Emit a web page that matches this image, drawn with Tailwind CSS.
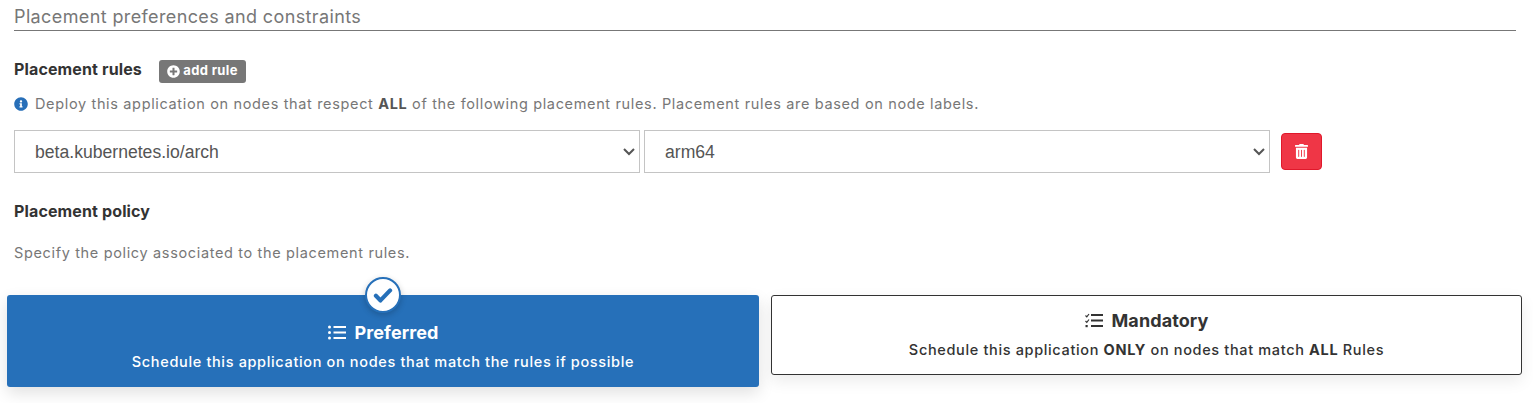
<!DOCTYPE html>
<html>
<head>
<meta charset="utf-8">
<script src="https://cdn.jsdelivr.net/npm/@tailwindcss/browser@4"></script>
</head>
<body class="bg-white font-['Inter',sans-serif] text-[#333] overflow-hidden">
<div class="h-[403px] w-[1533px] flex flex-col">
  <div class="ml-[14px] mr-[17px] h-[31px] border-b border-[#777] pt-[6px] text-[18px] leading-[22px] text-[#777] tracking-[0.38px]">Placement preferences and constraints</div>

  <div class="ml-[14px] mt-[29px] flex items-center h-[22px]">
    <span class="text-[16px] leading-[18px] font-bold tracking-[0.13px] text-[#333] w-[145px] mb-[4px]">Placement rules</span>
    <button class="h-[23px] w-[87px] rounded-[3px] bg-[#777] text-white text-[13px] font-bold tracking-[0.35px] flex items-center justify-center gap-[3px]">
      <svg class="w-[13px] h-[13px]" viewBox="0 0 512 512" fill="#fff"><path d="M256 8C119 8 8 119 8 256s111 248 248 248 248-111 248-248S393 8 256 8zm144 276c0 6.600-5.400 12-12 12h-92v92c0 6.600-5.400 12-12 12h-56c-6.600 0-12-5.400-12-12v-92h-92c-6.600 0-12-5.400-12-12v-56c0-6.600 5.400-12 12-12h92v-92c0-6.600 5.400-12 12-12h56c6.600 0 12 5.400 12 12v92h92c6.600 0 12 5.400 12 12v56z"/></svg>
      <span>add rule</span>
    </button>
  </div>

  <div class="ml-[14px] mt-[12px] flex items-center h-[20px] text-[14.500px] text-[#777] tracking-[0.65px]">
    <svg class="w-[14px] h-[14px] mr-[7px]" viewBox="0 0 512 512" fill="#286fb8"><path d="M256 8C119 8 8 119 8 256c0 137 111 248 248 248s248-111 248-248C504 119 393 8 256 8zm0 110c23.200 0 42 18.800 42 42s-18.800 42-42 42-42-18.800-42-42 18.800-42 42-42zm56 254c0 6.600-5.400 12-12 12h-88c-6.600 0-12-5.400-12-12v-24c0-6.600 5.400-12 12-12h12v-64h-12c-6.600 0-12-5.400-12-12v-24c0-6.600 5.400-12 12-12h64c6.600 0 12 5.400 12 12v100h12c6.600 0 12 5.400 12 12v24z"/></svg>
    <span>Deploy this application on nodes that respect <b class="font-bold text-[#555]">ALL</b> of the following placement rules. Placement rules are based on node labels.</span>
  </div>

  <div class="ml-[14px] mt-[16px] flex items-center h-[43px]">
    <div class="relative w-[626px] h-[43px]">
      <select class="appearance-none w-full h-full border border-[#c4c4c4] bg-white pl-[20px] pt-[2px] text-[17.600px] font-['Liberation_Sans',sans-serif] text-[#555]"><option>beta.kubernetes.io/arch</option></select>
      <svg class="absolute right-[5px] top-[18px] w-[12px] h-[8px] pointer-events-none" viewBox="0 0 12 8" fill="none" stroke="#555" stroke-width="2"><path d="M1 1l5 5 5-5"/></svg>
    </div>
    <div class="relative ml-[4px] w-[626px] h-[43px]">
      <select class="appearance-none w-full h-full border border-[#c4c4c4] bg-white pl-[20px] pt-[2px] text-[17.600px] font-['Liberation_Sans',sans-serif] text-[#555]"><option>arm64</option></select>
      <svg class="absolute right-[5px] top-[18px] w-[12px] h-[8px] pointer-events-none" viewBox="0 0 12 8" fill="none" stroke="#555" stroke-width="2"><path d="M1 1l5 5 5-5"/></svg>
    </div>
    <button class="ml-[11px] w-[41px] h-[37px] rounded-[4px] bg-[#ef3646] border border-[#e0182b] flex items-center justify-center">
      <svg class="w-[13px] h-[15px]" viewBox="0 0 448 512" fill="#fff"><path d="M32 464a48 48 0 0 0 48 48h288a48 48 0 0 0 48-48V128H32zm272-256a16 16 0 0 1 32 0v224a16 16 0 0 1-32 0zm-96 0a16 16 0 0 1 32 0v224a16 16 0 0 1-32 0zm-96 0a16 16 0 0 1 32 0v224a16 16 0 0 1-32 0zM432 32H312l-9.400-18.700A24 24 0 0 0 281.100 0H166.800a23.700 23.700 0 0 0-21.400 13.300L136 32H16A16 16 0 0 0 0 48v32a16 16 0 0 0 16 16h416a16 16 0 0 0 16-16V48a16 16 0 0 0-16-16z"/></svg>
    </button>
  </div>

  <div class="ml-[14px] mt-[27px] h-[22px] text-[16px] leading-[22px] font-bold tracking-[0.13px] text-[#333]">Placement policy</div>
  <div class="ml-[14px] mt-[21px] h-[20px] text-[14.500px] leading-[20px] text-[#777] tracking-[0.65px]">Specify the policy associated to the placement rules.</div>

  <div class="ml-[7px] mt-[32px] flex items-start gap-[12px]">
    <div class="relative w-[752px] h-[92px] rounded-[3px] bg-[#2670b9] text-white flex flex-col items-center pt-[26px] shadow-[0_6px_16px_rgba(0,0,0,0.12)]">
      <div class="absolute left-1/2 -translate-x-1/2 -top-[18px] w-[36px] h-[36px] rounded-full bg-white border-[2px] border-[#2670b9] flex items-center justify-center shadow-[0_2px_6px_rgba(0,0,0,0.2)]">
        <svg class="w-[20px] h-[20px]" viewBox="0 0 24 24" fill="none" stroke="#2670b9" stroke-width="5" stroke-linecap="round" stroke-linejoin="round"><path d="M3.500 13l5.500 5.500L20.500 6.500"/></svg>
      </div>
      <div class="flex items-center h-[22px] gap-[8px] pl-[1px]">
        <svg class="w-[18px] h-[15px]" viewBox="0 0 18 15" fill="#fff"><rect x="0" y="0.500" width="3" height="3" rx="1.500"/><rect x="0" y="6" width="3" height="3" rx="1.500"/><rect x="0" y="11.500" width="3" height="3" rx="1.500"/><rect x="5.500" y="1" width="12.500" height="2"/><rect x="5.500" y="6.500" width="12.500" height="2"/><rect x="5.500" y="12" width="12.500" height="2"/></svg>
        <span class="text-[18px] font-bold tracking-[0.1px]">Preferred</span>
      </div>
      <div class="mt-[9px] text-[14.500px] leading-[20px] font-medium tracking-[0.65px]">Schedule this application on nodes that match the rules if possible</div>
    </div>

    <div class="w-[751px] h-[80px] rounded-[3px] bg-white border border-[#333] text-[#333] flex flex-col items-center pt-[13px] shadow-[0_6px_16px_rgba(0,0,0,0.08)]">
      <div class="flex items-center h-[22px] gap-[8px] pl-[1px]">
        <svg class="w-[18px] h-[15px]" viewBox="0 0 18 15" fill="none" stroke="#333"><path d="M0.500 2.500l1.300 1.300L4 1" stroke-width="1.200"/><path d="M0.500 8l1.300 1.300L4 6.500" stroke-width="1.200"/><rect x="0.500" y="12" width="2.200" height="2.200" fill="#333" stroke="none"/><path d="M6 2h12M6 7.500h12M6 13h12" stroke-width="2"/></svg>
        <span class="text-[18px] font-bold tracking-[0.1px]">Mandatory</span>
      </div>
      <div class="mt-[9px] text-[14.500px] leading-[20px] font-medium tracking-[0.65px]">Schedule this application <b class="font-bold">ONLY</b> on nodes that match <b class="font-bold">ALL</b> Rules</div>
    </div>
  </div>
</div>
</body>
</html>
